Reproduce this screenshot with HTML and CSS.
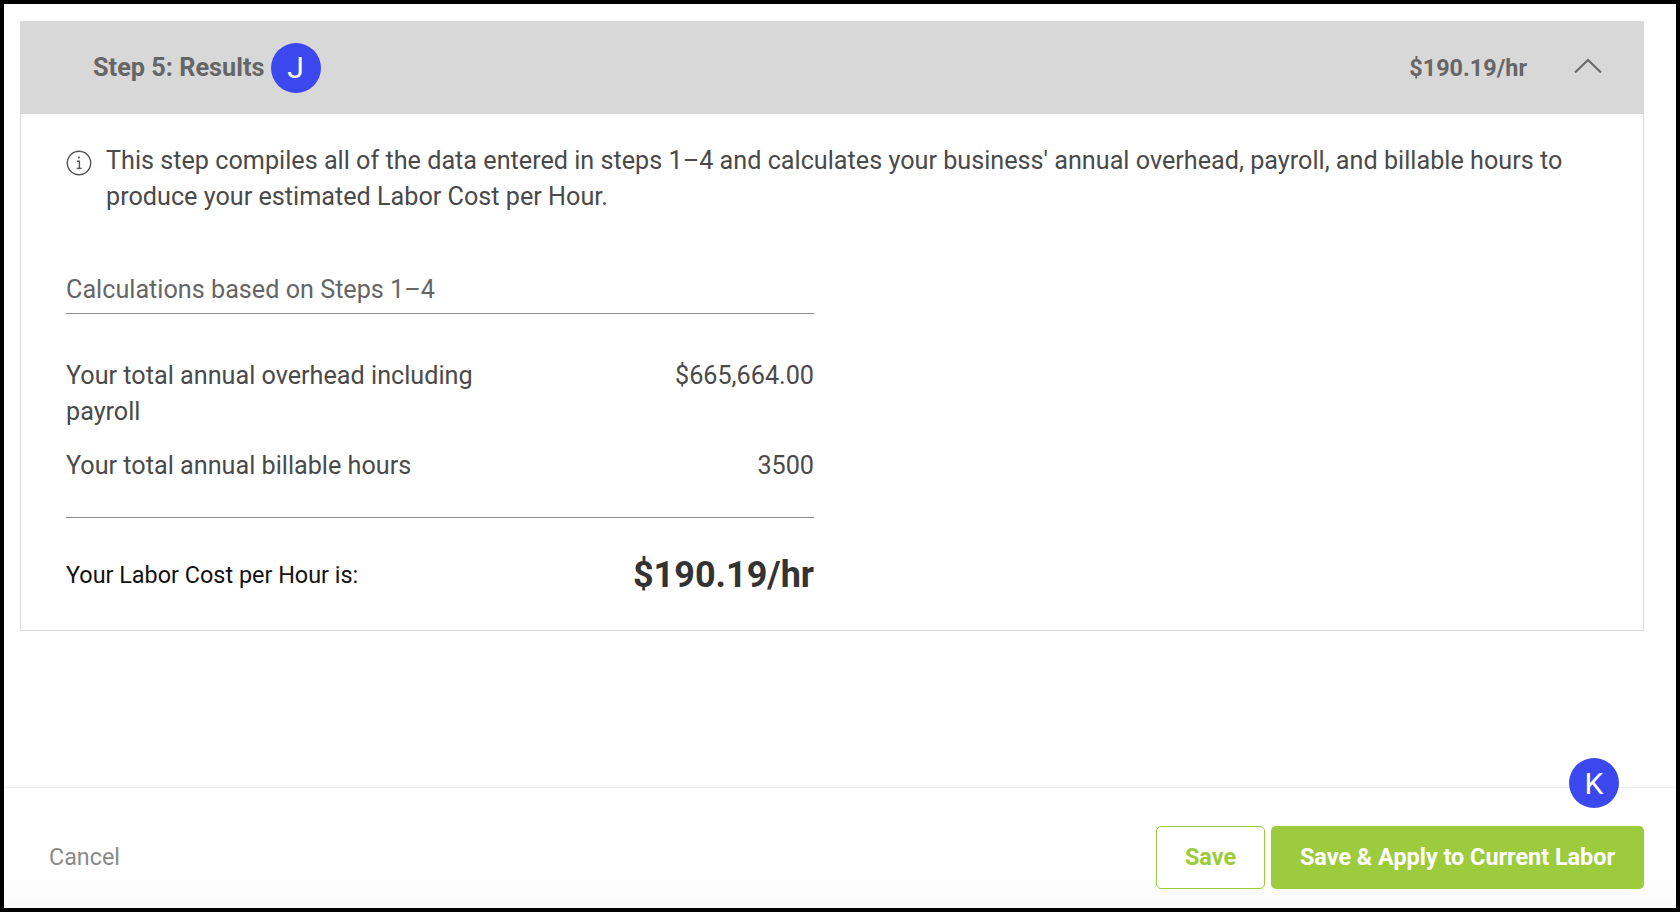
FILE: index.html
```html
<!DOCTYPE html>
<html lang="en">
<head>
    <meta charset="UTF-8">
    <title>Labor Cost Calculator</title>
    <link rel="stylesheet" href="styles.css">
</head>
<body>
<div class="frame">
    <main class="content">
        <section class="step">
            <header class="step-header">
                <div class="step-title">
                    <h2>Step 5: Results</h2>
                    <span class="marker">J</span>
                </div>
                <div class="step-summary">
                    <span class="step-rate">$190.19/hr</span>
                    <svg class="chevron" width="28" height="16" viewBox="0 0 28 16" fill="none" stroke="#666" stroke-width="2">
                        <path d="M1 14.5 L14 2 L27 14.5"/>
                    </svg>
                </div>
            </header>
            <div class="step-body">
                <div class="note">
                    <svg class="info-icon" width="26" height="26" viewBox="0 0 26 26" fill="none" stroke="#555">
                        <circle cx="13" cy="13" r="11.7" stroke-width="1.4"/>
                        <path d="M11 11.2 H13.4 V18.2 M10.6 18.4 H15.6" stroke-width="1.4"/>
                        <path d="M12.2 7.4 H13.8" stroke-width="2"/>
                    </svg>
                    <p>This step compiles all of the data entered in steps 1–4 and calculates your business' annual overhead, payroll, and billable hours to produce your estimated Labor Cost per Hour.</p>
                </div>
                <div class="calc">
                    <h3>Calculations based on Steps 1–4</h3>
                    <div class="calc-rows">
                        <div class="calc-row">
                            <span class="calc-label">Your total annual overhead including payroll</span>
                            <span>$665,664.00</span>
                        </div>
                        <div class="calc-row">
                            <span class="calc-label">Your total annual billable hours</span>
                            <span>3500</span>
                        </div>
                    </div>
                    <div class="calc-total">
                        <span>Your Labor Cost per Hour is:</span>
                        <strong>$190.19/hr</strong>
                    </div>
                </div>
            </div>
        </section>
    </main>
    <footer class="actions">
        <span class="marker marker-k">K</span>
        <a class="cancel" href="#">Cancel</a>
        <div class="buttons">
            <button type="button" class="btn btn-outline">Save</button>
            <button type="button" class="btn btn-solid">Save &amp; Apply to Current Labor</button>
        </div>
    </footer>
</div>
</body>
</html>
```

FILE: styles.css
```css
* {
    box-sizing: border-box;
}

html, body {
    height: 100%;
}

body {
    margin: 0;
    font-family: Roboto, "Liberation Sans", sans-serif;
    color: #4a4a4a;
    background-color: #000;
}

.frame {
    height: 912px;
    border: 4px solid #000;
    background-color: #fff;
    display: flex;
    flex-direction: column;
}

.content {
    flex: 1;
    padding: 17px 32px 0 16px;
}

.step {
    border: 1px solid #d9d9d9;
    border-top: none;
}

.step-header {
    height: 93px;
    margin: 0 -1px;
    padding: 0 42px 0 73px;
    background-color: #d8d8d8;
    display: flex;
    justify-content: space-between;
    align-items: center;
    color: #666;
    font-size: 23.4px;
    font-weight: 700;
}

.step-title {
    display: flex;
    align-items: center;
    gap: 6px;
}

.step-title h2 {
    margin: 0;
    font-size: 25.3px;
}

.marker {
    width: 50px;
    height: 50px;
    border-radius: 50%;
    background-color: #3b48ee;
    color: #fff;
    font-size: 30px;
    font-weight: 400;
    display: flex;
    align-items: center;
    justify-content: center;
}

.step-summary {
    display: flex;
    align-items: center;
    gap: 47px;
}

.chevron {
    margin-top: -3px;
}

.step-body {
    padding: 29px 30px 0 45px;
    font-size: 25.2px;
    line-height: 36px;
}

.note {
    display: flex;
    gap: 14px;
}

.note p {
    margin: 0;
}

.info-icon {
    flex: none;
    margin-top: 7px;
}

.calc {
    width: 748px;
    margin-top: 57px;
}

.calc h3 {
    margin: 0;
    padding-bottom: 5px;
    font-size: 25.2px;
    font-weight: 400;
    color: #666;
    border-bottom: 1px solid #8c8c8c;
}

.calc-rows {
    padding: 44px 0 33px;
    border-bottom: 1px solid #8c8c8c;
    display: flex;
    flex-direction: column;
    gap: 18px;
}

.calc-row {
    display: flex;
    justify-content: space-between;
}

.calc-label {
    width: 440px;
}

.calc-total {
    height: 112px;
    padding-top: 2px;
    display: flex;
    justify-content: space-between;
    align-items: center;
    color: #111;
    font-size: 23.4px;
}

.calc-total strong {
    color: #333;
    font-size: 36px;
}

.actions {
    position: relative;
    height: 121px;
    border-top: 1px solid #ececec;
    padding: 38px 32px 0 45px;
    display: flex;
    justify-content: space-between;
    align-items: flex-start;
    background: linear-gradient(#fff 70%, #fafafa);
}

.marker-k {
    position: absolute;
    top: -30px;
    right: 57px;
}

.cancel {
    margin-top: 17px;
    font-size: 23.3px;
    color: #8a8a8a;
    text-decoration: none;
}

.buttons {
    display: flex;
    gap: 6px;
}

.btn {
    height: 63px;
    padding-bottom: 3px;
    border-radius: 5px;
    font-family: inherit;
    font-size: 23.4px;
    font-weight: 700;
}

.btn-outline {
    width: 109px;
    color: #9ccb3d;
    background-color: #fff;
    border: 1px solid #9ccb3d;
}

.btn-solid {
    width: 373px;
    color: #fff;
    background-color: #9ccb3d;
    border: none;
}
```
